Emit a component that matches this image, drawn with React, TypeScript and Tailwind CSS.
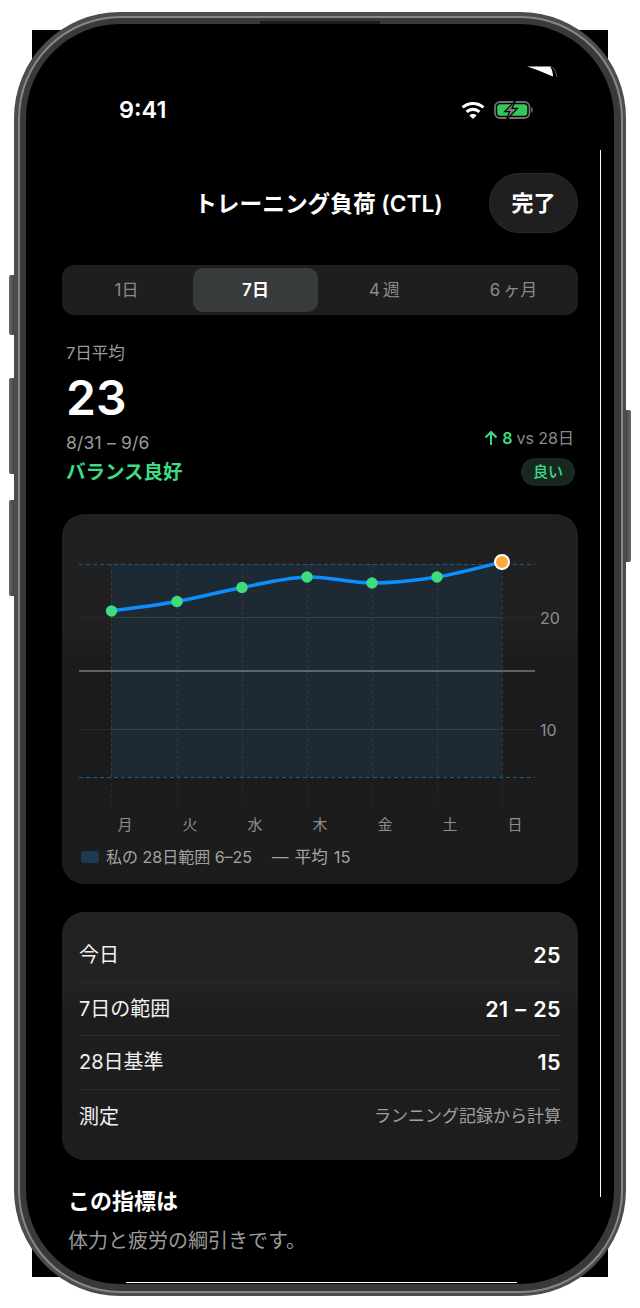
import React from "react";

const pts: [number, number][] = [
  [111.5, 611],
  [177, 601.5],
  [242, 587.5],
  [307, 577],
  [372, 583],
  [437, 577],
  [502, 562],
];

function smooth(p: [number, number][]) {
  let d = `M${p[0][0]} ${p[0][1]}`;
  for (let i = 0; i < p.length - 1; i++) {
    const p0 = p[Math.max(0, i - 1)];
    const p1 = p[i];
    const p2 = p[i + 1];
    const p3 = p[Math.min(p.length - 1, i + 2)];
    const c1x = p1[0] + (p2[0] - p0[0]) / 6;
    const c1y = p1[1] + (p2[1] - p0[1]) / 6;
    const c2x = p2[0] - (p3[0] - p1[0]) / 6;
    const c2y = p2[1] - (p3[1] - p1[1]) / 6;
    d += ` C${c1x} ${c1y} ${c2x} ${c2y} ${p2[0]} ${p2[1]}`;
  }
  return d;
}

const days = ["月", "火", "水", "木", "金", "土", "日"];
const tabs = ["1日", "7日", "4 週", "6 ヶ月"];

function Chart() {
  return (
    <svg viewBox="62 514 516 326" className="block w-[516px] h-[326px]">
      <rect x="111" y="564" width="391" height="213" fill="#1e2a33" />
      <line x1="79" x2="535" y1="617.5" y2="617.5" stroke="#292929" />
      <line x1="79" x2="535" y1="729.5" y2="729.5" stroke="#292929" />
      <line x1="111" x2="502" y1="617.5" y2="617.5" stroke="#3b3d3e" />
      <line x1="111" x2="502" y1="729.5" y2="729.5" stroke="#3b3d3e" />
      {pts.map(([x]) => (
        <g key={x}>
          <line x1={Math.floor(x) + 0.5} x2={Math.floor(x) + 0.5} y1="564" y2="777" stroke="#383a3b" strokeDasharray="3 3" />
          <line x1={Math.floor(x) + 0.5} x2={Math.floor(x) + 0.5} y1="777" y2="806" stroke="#2a2a2a" strokeDasharray="3 3" />
        </g>
      ))}
      <line x1="79" x2="535" y1="564.5" y2="564.5" stroke="#1a5a8c" strokeDasharray="4 3" />
      <line x1="79" x2="535" y1="777.5" y2="777.5" stroke="#1a5a8c" strokeDasharray="4 3" />
      <line x1="79" x2="535" y1="671" y2="671" stroke="#7a7a7a" strokeWidth="1.6" />
      <path d={smooth(pts)} fill="none" stroke="#0a8fff" strokeWidth="3.5" strokeLinecap="round" />
      {pts.slice(0, 6).map(([x, y]) => (
        <circle key={x} cx={x} cy={y} r="5.7" fill="#3ddc7e" />
      ))}
      <circle cx="502" cy="562" r="7" fill="#ffa93d" stroke="#ffffff" strokeWidth="2" />
      <text x="540" y="623.5" fontSize="16" fill="#8e8e8e">20</text>
      <text x="540" y="735.5" fontSize="16" fill="#8e8e8e">10</text>
      {days.map((d, i) => (
        <text key={d} x={125 + i * 65} y="830" fontSize="15" fill="#8e8e8e" textAnchor="middle">{d}</text>
      ))}
    </svg>
  );
}

function Wifi() {
  return (
    <svg viewBox="0 0 24 18" className="w-[24px] h-[18px]" fill="none" stroke="#fff" strokeWidth="3.1">
      <path d="M1.6 6.4C7.4 1.2 16.6 1.2 22.4 6.4" />
      <path d="M5.6 10.8C9.2 7.6 14.8 7.6 18.4 10.8" />
      <path d="M12 18L8.4 14.4C10.4 12.6 13.6 12.6 15.6 14.4Z" fill="#fff" stroke="none" />
    </svg>
  );
}

function Battery() {
  return (
    <svg viewBox="0 0 39 20" className="w-[39px] h-[20px]">
      <rect x="1" y="2" width="34.5" height="16" rx="5" fill="none" stroke="#6f6f6f" strokeWidth="1.8" />
      <rect x="3.2" y="4.2" width="30" height="11.6" rx="3" fill="#34c759" />
      <rect x="37" y="7.5" width="1.8" height="5" rx="0.9" fill="#5a5a5a" />
      <path d="M21.5 0.6L10.5 11.6H15.5L12.5 19.6L23.5 8.4H18Z" fill="#7a7a7a" stroke="#000" strokeWidth="1.2" />
    </svg>
  );
}

function Row({ label, value, last, muted }: { label: string; value: string; last?: boolean; muted?: boolean }) {
  return (
    <div className={`flex items-center justify-between h-[53.6px] ${last ? "" : "border-b border-[#292929]"}`}>
      <span className="text-[20px] text-[#f0f0f0]">{label}</span>
      {muted ? (
        <span className="text-[17px] text-[#a0a0a0]">{value}</span>
      ) : (
        <span className="text-[21.5px] font-semibold text-white tracking-[0.4px] [word-spacing:1px]">{value}</span>
      )}
    </div>
  );
}

export default function App() {
  return (
    <div className="relative w-[640px] h-[1308px] bg-white overflow-hidden font-[Inter,'Noto_Sans_CJK_JP',sans-serif]">
      {/* black backing rectangle that pokes out at the corners */}
      <div className="absolute left-[32px] top-[30px] w-[576px] h-[1247px] bg-black" />
      {/* hardware buttons */}
      <div className="absolute left-[9px] top-[275px] w-[6px] h-[60px] rounded-l-[2px] bg-gradient-to-r from-[#6a6c6d] to-[#3a3c3d]" />
      <div className="absolute left-[9px] top-[378px] w-[6px] h-[96px] rounded-l-[2px] bg-gradient-to-r from-[#6a6c6d] to-[#3a3c3d]" />
      <div className="absolute left-[9px] top-[500px] w-[6px] h-[96px] rounded-l-[2px] bg-gradient-to-r from-[#6a6c6d] to-[#3a3c3d]" />
      <div className="absolute left-[625px] top-[410px] w-[6px] h-[152px] rounded-r-[2px] bg-gradient-to-r from-[#3a3c3d] to-[#6a6c6d]" />

      <div className="relative ml-[14px] mt-[12px] w-[612px] h-[1284px] rounded-[106px] bg-[#4a4c4d] p-[3.5px]">
        <div className="w-full h-full rounded-[102.5px] bg-[#85878a] p-[2px]">
          <div className="w-full h-full rounded-[100.5px] bg-[#38393a] p-[6.5px]">
            <div className="w-full h-full rounded-[94px] bg-black overflow-hidden px-[36px] text-white">
              {/* status bar */}
              <div className="h-[72px]" />
              <div className="flex items-center justify-between h-[28px] pl-[57px] pr-[45px]">
                <span className="text-[23.5px] font-semibold">9:41</span>
                <div className="flex items-center gap-[9.5px]">
                  <Wifi />
                  <Battery />
                </div>
              </div>
              {/* header */}
              <div className="relative mt-[49px] h-[60px] flex items-center justify-center">
                <span className="text-[22.7px] font-semibold text-white ml-[-3px] pt-[2px]">トレーニング負荷 (CTL)</span>
                <div className="absolute right-0 top-0 flex items-center justify-center w-[89px] h-[60px] rounded-full bg-[#1f1f1f] border border-[#2c2c2c] text-[22px] font-semibold">完了</div>
              </div>
              {/* tabs */}
              <div className="mt-[32px] h-[50px] rounded-[12px] bg-[#1e1e1e] grid grid-cols-4 items-center">
                {tabs.map((t, i) =>
                  i === 1 ? (
                    <div key={t} className="h-[44px] mx-[2px] pt-[2px] rounded-[10px] bg-[#383b3c] flex items-center justify-center text-[17px] font-semibold text-white">{t}</div>
                  ) : (
                    <div key={t} className="h-[44px] pt-[2px] flex items-center justify-center text-[17px] text-[#8a8a8a] [word-spacing:-2px]">{t}</div>
                  )
                )}
              </div>
              {/* summary */}
              <div className="mt-[26px] h-[148px] flex items-stretch justify-between pl-[4px] pr-[3px]">
                <div className="flex flex-col">
                  <span className="text-[16.5px] leading-[24px] text-[#9a9a9a]">7日平均</span>
                  <span className="text-[48px] leading-[66px] font-semibold text-white">23</span>
                  <span className="text-[17.5px] leading-[24px] text-[#9a9a9a] tracking-[0.2px]">8/31 – 9/6</span>
                  <span className="text-[19.5px] leading-[34px] font-semibold text-[#3ddc84]">バランス良好</span>
                </div>
                <div className="flex flex-col items-end justify-end">
                  <span className="flex items-center gap-[4px] mr-[1px] text-[16px] leading-[24px] text-[#8a8a8a]">
                    <svg viewBox="0 0 14 16" className="w-[14px] h-[16px]" fill="none" stroke="#3ddc84" strokeWidth="2">
                      <path d="M7 15V2M1.5 7.5L7 2L12.5 7.5" />
                    </svg>
                    <span className="font-semibold text-[#3ddc84]">8</span>
                    <span>vs 28日</span>
                  </span>
                  <span className="mt-[8px] mb-[3px] flex items-center justify-center w-[54px] h-[28px] rounded-full bg-[#182820] text-[15px] font-medium text-[#3ddc84]">良い</span>
                </div>
              </div>
              {/* chart card */}
              <div className="mt-[25px] h-[370px] rounded-[22px] bg-gradient-to-b from-[#202020] from-[30%] via-[#1b1b1b] via-[40%] to-[#1c1c1c] flex flex-col">
                <Chart />
                <div className="flex items-center h-[34px] pl-[19px] text-[16px] text-[#a3a3a3]">
                  <span className="w-[18px] h-[12px] rounded-[3px] bg-[#1c3a52] mr-[7px]" />
                  <span>私の 28日範囲 6–25</span>
                  <span className="ml-[20px] text-[16.5px] [word-spacing:1.5px]">— 平均 15</span>
                </div>
              </div>
              {/* table card */}
              <div className="mt-[28px] h-[248px] rounded-[22px] bg-gradient-to-b from-[#222222] from-[30%] via-[#1d1d1d] via-[42%] to-[#1e1e1e] px-[17px] pt-[17px]">
                <Row label="今日" value="25" />
                <Row label="7日の範囲" value="21 – 25" />
                <Row label="28日基準" value="15" />
                <Row label="測定" value="ランニング記録から計算" last muted />
              </div>
              {/* note */}
              <div className="mt-[25px] pl-[6px] text-[22px] leading-[32px] font-bold text-white">この指標は</div>
              <div className="mt-[8px] pl-[6px] text-[20px] leading-[32px] text-[#9a9a9a]">体力と疲労の綱引きです。</div>
            </div>
          </div>
        </div>
        {/* stray artefacts of the mock-up */}
        <div className="absolute left-[246px] top-[9px] w-[120px] h-[3px] bg-[#1c1c1c]" />
        <svg viewBox="0 0 32 12" className="absolute left-[513px] top-[54px] w-[32px] h-[12px]">
          <path d="M0 0.4H23C25 3 26 7 26 10.5C18 7 9 3 0 0.4Z" fill="#ffffff" />
          <path d="M23 0.4C27 1 29 6 30 11" stroke="#666" strokeWidth="1" fill="none" />
        </svg>
      </div>
      <div className="absolute left-[600px] top-[150px] w-[1px] h-[1047px] bg-white" />
      <div className="absolute left-[126px] top-[1282px] w-[391px] h-[1px] bg-white" />
    </div>
  );
}
